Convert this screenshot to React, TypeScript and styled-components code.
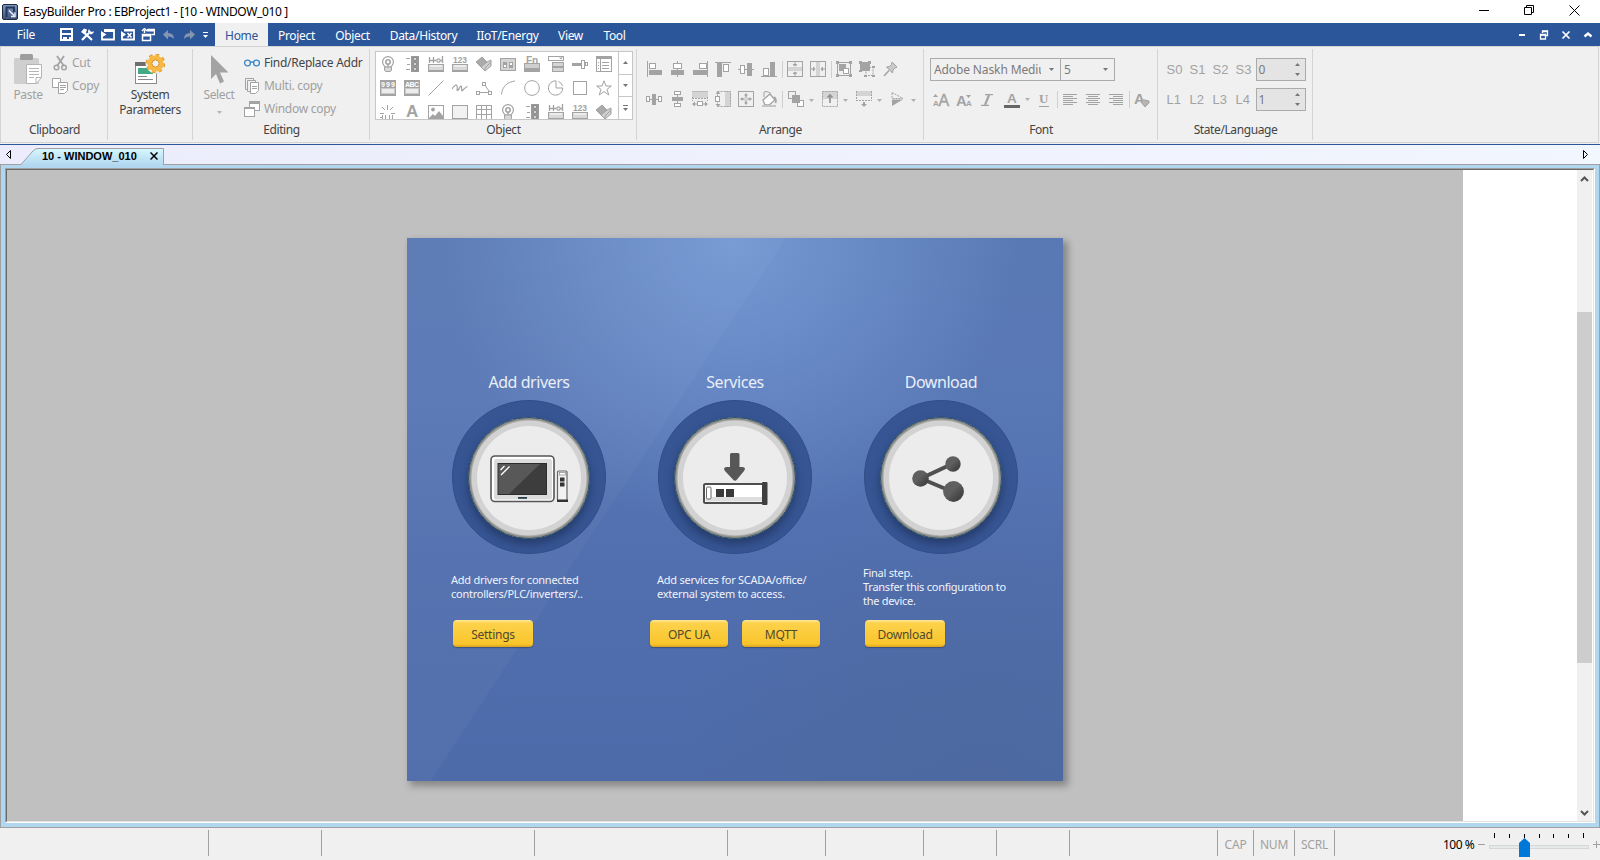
import React from "react";
import styled, { createGlobalStyle } from "styled-components";

const GlobalStyle = createGlobalStyle`
  * { box-sizing: border-box; }
  body { margin: 0; background: #f0f0f0; overflow: hidden; }
  svg { display: block; flex: none; }
`;

const UI = `"Noto Sans", "Open Sans", sans-serif`;
const G = "#a3a3a3";
const L = "#d4d4d4";
const W = "#fff";

const Window = styled.div`
  width: 1600px;
  height: 860px;
  display: flex;
  flex-direction: column;
  font-family: ${UI};
  font-size: 12px;
  color: #444;
  background: #f0f0f0;
  white-space: nowrap;
  cursor: default;
`;

const TitleBar = styled.header`
  height: 23px;
  background: #fff;
  display: flex;
  align-items: center;
  padding-left: 2px;
  color: #000;
`;
const TitleText = styled.div`
  margin-left: 5px;
  line-height: 20px;
  letter-spacing: -0.36px;
  flex: 1;
`;
const WindowButtons = styled.div`
  display: flex;
  gap: 34px;
  padding-right: 20px;
  margin-top: -3px;
`;

const MenuBar = styled.nav`
  height: 23px;
  background: #2b579a;
  display: flex;
  align-items: center;
  color: #fff;
`;
const FileButton = styled.div`
  width: 52px;
  text-align: center;
  letter-spacing: -0.2px;
  line-height: 22px;
`;
const QuickAccess = styled.div`
  width: 163px;
  height: 23px;
  display: flex;
  align-items: center;
  padding-left: 7px;
`;
const MenuTab = styled.div<{ $w: number; $active?: boolean }>`
  width: ${(p) => p.$w}px;
  height: 23px;
  line-height: 25px;
  text-align: center;
  letter-spacing: -0.33px;
  background: ${(p) => (p.$active ? "#f0f0f0" : "transparent")};
  color: ${(p) => (p.$active ? "#2b579a" : "#fff")};
`;
const MdiButtons = styled.div`
  margin-left: auto;
  padding-right: 7px;
  display: flex;
  gap: 12px;
`;

const Ribbon = styled.section`
  height: 97px;
  margin: 0 1px 1px 0;
  border: 1px solid #d4d4d4;
  padding: 2px 0;
  display: flex;
`;
const Group = styled.div<{ $w: number }>`
  width: ${(p) => p.$w}px;
  height: 91px;
  border-right: 1px solid #d4d4d4;
  display: flex;
  flex-direction: column;
`;
const GroupBody = styled.div<{ $pl?: number; $pt?: number }>`
  height: 72px;
  display: flex;
  padding-left: ${(p) => p.$pl ?? 0}px;
  padding-top: ${(p) => p.$pt ?? 0}px;
`;
const Caption = styled.div`
  padding-left: 1px;
  text-align: center;
  line-height: 18px;
  letter-spacing: -0.4px;
`;
const BigButton = styled.div<{ $w: number; $off?: boolean }>`
  width: ${(p) => p.$w}px;
  display: flex;
  flex-direction: column;
  align-items: center;
  text-align: center;
  line-height: 15px;
  letter-spacing: -0.35px;
  color: ${(p) => (p.$off ? "#a0a0a0" : "#444")};
`;
const BigIcon = styled.div`
  height: 33px;
`;
const Commands = styled.div<{ $ml: number }>`
  display: flex;
  flex-direction: column;
  margin: -3px 0 0 ${(p) => p.$ml}px;
`;
const Command = styled.div<{ $off?: boolean }>`
  height: 23px;
  flex: none;
  display: flex;
  align-items: center;
  gap: 4px;
  letter-spacing: -0.27px;
  color: ${(p) => (p.$off ? "#a0a0a0" : "#444")};
`;

const Gallery = styled.div`
  width: 258px;
  height: 69px;
  margin: 1px 0 0 5px;
  border: 1px solid #c6c6c6;
  background: #fff;
  display: flex;
`;
const GalleryGrid = styled.div`
  width: 242px;
  height: 67px;
  overflow: hidden;
  padding: 4px 0 0 4px;
  display: grid;
  grid-template-columns: repeat(10, 24px);
  grid-auto-rows: 24px;
`;
const GalleryScroll = styled.div`
  width: 14px;
  border-left: 1px solid #c6c6c6;
  display: flex;
  flex-direction: column;
`;
const ScrollCell = styled.div`
  flex: 1;
  display: flex;
  align-items: center;
  justify-content: center;
  & + & { border-top: 1px solid #c6c6c6; }
`;

const ToolRow = styled.div<{ $gap?: number; $h?: number }>`
  display: flex;
  align-items: center;
  gap: ${(p) => p.$gap ?? 7}px;
  height: ${(p) => p.$h ?? 16}px;
`;
const ToolRows = styled.div<{ $gap: number }>`
  display: flex;
  flex-direction: column;
  gap: ${(p) => p.$gap}px;
`;
const Divider = styled.i<{ $l: number; $r: number }>`
  width: 1px;
  height: 17px;
  background: #cfcfcf;
  margin-left: ${(p) => p.$l}px;
  margin-right: ${(p) => p.$r}px;
`;
const Slot = styled.span<{ $w: number }>`
  flex: none;
  width: ${(p) => p.$w}px;
  display: flex;
  justify-content: center;
`;
const MenuArrow = styled.span`
  width: 5px;
  margin: 2px 1px 0 -2px;
`;
const Combo = styled.div<{ $w: number }>`
  width: ${(p) => p.$w}px;
  height: 23px;
  border: 1px solid #ababab;
  display: flex;
  align-items: center;
  padding: 0 6px 0 3px;
  color: #7b7b7b;
  letter-spacing: -0.12px;
  & + & { margin-left: -1px; }
`;
const ComboText = styled.span`
  flex: 1;
  overflow: hidden;
  margin-right: 8px;
`;
const StateRow = styled.div`
  height: 23px;
  display: flex;
  align-items: center;
`;
const StateLabel = styled.span`
  width: 23px;
  font: 13px "Liberation Sans", sans-serif;
  color: #a3a3a3;
  &:nth-child(4) { width: 20px; }
`;
const Spinner = styled.div`
  width: 50px;
  height: 23px;
  border: 1px solid #ababab;
  background: #e4e4e4;
  display: flex;
  align-items: center;
  justify-content: space-between;
  padding: 0 5px 0 2px;
  color: #7b7b7b;
`;

const TabStrip = styled.div`
  height: 20px;
  border-top: 1px solid #2b579a;
  background: linear-gradient(90deg, #ececfc, #f2f6fe);
  display: flex;
  justify-content: space-between;
  align-items: flex-start;
`;
const TabScroll = styled.div<{ $w: number }>`
  width: ${(p) => p.$w}px;
  padding-top: 4px;
`;
const TabGroup = styled.div`
  display: flex;
`;
const DocTab = styled.div`
  position: relative;
  z-index: 1;
  margin: 3px 0 -1px;
  width: 144px;
  height: 18px;
  display: grid;
  & > * { grid-area: 1 / 1; }
`;
const DocTabLabel = styled.div`
  z-index: 1;
  display: flex;
  align-items: center;
  padding: 0 7px 2px 21px;
  justify-content: space-between;
  font: bold 11px "Liberation Sans", sans-serif;
  color: #000;
`;

const Frame = styled.main`
  height: 664px;
  border: 1px solid #a0a0a0;
  background: #b1d6f0;
  padding: 3px 4px 4px;
`;
const Sunken = styled.div`
  height: 655px;
  border: 1px solid;
  border-color: #a0a0a0 #fff #fff #a0a0a0;
`;
const Workspace = styled.div`
  height: 653px;
  border: 1px solid;
  border-color: #696969 #e3e3e3 #e3e3e3 #696969;
  background: #fff;
  display: flex;
`;
const Canvas = styled.div`
  width: 1456px;
  background: #c0c0c0;
  padding: 68px 0 0 400px;
`;
const ScrollBar = styled.div`
  margin: 0 1px 0 auto;
  width: 15px;
  background: #f0f0f0;
  display: flex;
  flex-direction: column;
  align-items: center;
  padding: 6px 0 5px;
`;
const ScrollThumb = styled.div`
  width: 15px;
  height: 351px;
  margin: 130px 0 auto;
  background: #cdcdcd;
`;

const Panel = styled.div`
  width: 656px;
  height: 543px;
  background:
    linear-gradient(to bottom right, rgba(255,255,255,.03) 50%, transparent 50.2%) 23px 0 / 355px 543px no-repeat,
    linear-gradient(rgba(255,255,255,.03), rgba(255,255,255,.03)) 0 0 / 23px 543px no-repeat,
    radial-gradient(circle 290px at 325px 0, rgba(135,173,232,.62), rgba(130,168,226,.37) 45%, transparent),
    radial-gradient(circle 320px at 580px 560px, rgba(76,100,145,.4), transparent),
    linear-gradient(#5979b4, #5877b5 30%, #516fae 60%, #4d6ba9);
  box-shadow: 4px 4px 7px 1px rgba(0, 0, 0, .3);
  padding: 133px 0 0 19px;
  display: flex;
  color: #e9eef8;
`;
const Step = styled.section`
  width: 206px;
  display: flex;
  flex-direction: column;
`;
const StepTitle = styled.h2`
  margin: 0 0 7px;
  font-size: 16px;
  font-weight: 400;
  line-height: 22px;
  letter-spacing: -0.45px;
  text-align: center;
`;
const Ring = styled.div`
  width: 154px;
  height: 154px;
  margin: 0 auto;
  border-radius: 50%;
  background: #375593;
  border: 1px solid #314e89;
  display: flex;
  align-items: center;
  justify-content: center;
  padding-top: 1px;
`;
const Disc = styled.div<{ $pt: number; $pr: number }>`
  width: 122px;
  height: 122px;
  border-radius: 50%;
  background: #ececec;
  border: 1px solid #2f5162;
  box-shadow: inset 0 0 0 1.5px #8e8e88, inset 0 0 0 2.5px #aaa, inset 0 0 0 8px #d2d2d2, 0 5px 8px rgba(20, 35, 70, .5);
  padding: ${(p) => p.$pt}px ${(p) => p.$pr}px 0 0;
  display: flex;
  align-items: center;
  justify-content: center;
`;
const Description = styled.p`
  margin: 0;
  height: 66px;
  padding: 0 0 1px 25px;
  display: flex;
  flex-direction: column;
  justify-content: center;
  font-size: 11px;
  line-height: 14px;
  letter-spacing: -0.25px;
  color: #f0f3fa;
`;
const Actions = styled.div<{ $pl: number }>`
  display: flex;
  gap: 14px;
  padding-left: ${(p) => p.$pl}px;
`;
const ActionButton = styled.div<{ $w: number }>`
  width: ${(p) => p.$w}px;
  height: 27px;
  border-radius: 4px;
  background: linear-gradient(#ffe9a0, #fcd24c 3px, #fac52c 24px, #d9a41c);
  box-shadow: 0 1px 1px rgba(40, 50, 80, .5);
  color: #50492e;
  font-size: 12px;
  line-height: 29px;
  text-align: center;
  letter-spacing: -0.25px;
`;

const StatusBar = styled.footer`
  height: 32px;
  display: flex;
  padding-top: 2px;
`;
const StatusCell = styled.div<{ $w: number }>`
  width: ${(p) => p.$w}px;
  height: 26px;
  border-right: 1px solid #a0a0a0;
  line-height: 29px;
  text-align: center;
  color: #a0a0a0;
  letter-spacing: -0.2px;
`;
const Zoom = styled.div`
  margin-left: auto;
  display: flex;
  color: #000;
  line-height: 29px;
  letter-spacing: -0.5px;
`;
const ZoomText = styled.span`
  width: 35px;
`;

type IconProps = { w?: number; h?: number; c?: string; children: React.ReactNode };
const Icon = ({ w = 16, h = 16, c = G, children }: IconProps) => (
  <svg width={w} height={h} viewBox={`0 0 ${w} ${h}`} fill="none" stroke={c} strokeWidth="1">
    {children}
  </svg>
);
type BoxProps = { x: number; y: number; w: number; h: number; f?: string; s?: string };
const B = ({ x, y, w, h, f = G }: BoxProps) => (
  <rect x={x} y={y} width={w} height={h} fill={f} stroke="none" />
);
const O = ({ x, y, w, h, f = "none", s = G }: BoxProps) => (
  <rect x={x + 0.5} y={y + 0.5} width={w - 1} height={h - 1} fill={f} stroke={s} />
);
const DashBox = ({ x, y, w, h }: BoxProps) => (
  <rect x={x + 0.5} y={y + 0.5} width={w - 1} height={h - 1} strokeDasharray="2 1" />
);
type GlyphProps = { x: number; y: number; s: number; c?: string; children: string; w?: number; f?: string };
const T = ({ x, y, s, c = G, children, w, f = "Liberation Sans" }: GlyphProps) => (
  <text x={x} y={y} fontSize={s} fontWeight="bold" fontFamily={`${f}, sans-serif`} fill={c} stroke="none" textLength={w}>{children}</text>
);
const Caret = ({ up, c = "#777" }: { up?: boolean; c?: string }) => (
  <svg width="5" height="3" viewBox="0 0 5 3">
    <path d={up ? "M0 3L2.500 0L5 3Z" : "M0 0H5L2.500 3Z"} fill={c} />
  </svg>
);

/* Object gallery */
const Bulb = () => (
  <Icon>
    <circle cx="8" cy="6" r="5.400" strokeWidth="1.200" />
    <circle cx="8" cy="6" r="2.200" strokeWidth="1.600" />
    <path d="M8 8v3" strokeWidth="1.400" />
    <path d="M4.500 11h7v3.500l-1.500 1h-4L4.500 14.500z" fill="#d9d9d9" />
  </Icon>
);
const Traffic = () => (
  <Icon>
    <path d="M2 2.500h4M3 8.500h3M2 13.500h4" />
    <B x={7} y={0} w={8} h={16} f="#999" />
    <g fill={L} stroke="#888"><circle cx="11" cy="3" r="1.800" /><circle cx="11" cy="8" r="1.800" /><circle cx="11" cy="13" r="1.800" /></g>
  </Icon>
);
const Key = () => (
  <>
    <O x={0} y={8} w={16} h={8} f="#d9d9d9" />
    <B x={0} y={14} w={16} h={2} />
    <B x={2} y={9} w={12} h={2} f="#ededed" />
  </>
);
const MultiState = () => (
  <Icon>
    <path d="M1.500 1v6M1.500 4.500h4M5.500 1v6M6 4.500h2M14.500 0v7M12.500 4.500h2" strokeWidth="1.300" />
    <circle cx="10.500" cy="4.500" r="1.700" strokeWidth="1.300" />
    <Key />
  </Icon>
);
const Digits = () => <Icon><T x={1} y={7} s={8.5} w={14}>123</T><Key /></Icon>;
const Cubes = () => (
  <Icon>
    <path d="M0 6L6 1L11 6L5 11Z" fill="#aaa" />
    <path d="M5 11L11 6L15 4V10L9 15Z" fill="#cfcfcf" />
    <path d="M5 11L9 15V12L15 6" />
  </Icon>
);
const Toggle = () => (
  <Icon>
    <O x={0} y={2} w={16} h={13} f={L} />
    <O x={3} y={6} w={4} h={6} f="#fff" /><O x={9} y={6} w={4} h={6} f="#fff" />
    <B x={4} y={6} w={2} h={3} /><B x={10} y={9} w={2} h={3} />
  </Icon>
);
const FnKey = () => (
  <Icon>
    <O x={0} y={7} w={16} h={9} f="#cfcfcf" /><B x={0} y={12} w={16} h={4} />
    <T x={2} y={8} s={10}>Fn</T>
  </Icon>
);
const ComboObj = () => (
  <Icon>
    <O x={0} y={0} w={16} h={5} f="#fff" /><path d="M11 1.500h4l-2 2z" fill={G} stroke="none" />
    <O x={4} y={6} w={12} h={5} f={L} /><O x={4} y={11} w={12} h={5} f={L} />
  </Icon>
);
const Slider = () => (
  <Icon><B x={0} y={7} w={9} h={3} /><O x={9} y={4} w={4} h={9} f="#fff" /><O x={13} y={6} w={3} h={4} f="#fff" /></Icon>
);
const ListObj = () => (
  <Icon><O x={0} y={0} w={16} h={16} f="#fff" /><B x={0} y={0} w={16} h={3} /><path d="M4.500 3v12M6 6.500h7M6 9.500h7M6 12.500h7M2 6.500h1M2 9.500h1M2 12.500h1" /></Icon>
);
const Numeric = ({ t }: { t: string }) => (
  <Icon><B x={0} y={0} w={16} h={16} /><T x={1} y={6.5} s={7} w={14} c="#fff">{t}</T><O x={1} y={8} w={14} h={6} f="#ececec" s="#c9c9c9" /></Icon>
);
const LineObj = () => <Icon><path d="M.5 15.500L15.500.5" /></Icon>;
const Scribble = () => <Icon><path d="M0 9C2 6 4 4 5 6S4 12 6 10S9 4 9.500 7S9 12 11 10S15 6 15.500 7" strokeWidth="1.200" /></Icon>;
const PolyObj = () => (
  <Icon><O x={6} y={2} w={4} h={4} f="#fff" /><O x={0} y={11} w={4} h={4} f="#fff" /><O x={12} y={11} w={4} h={4} f="#fff" /><path d="M4 12.500h8M9.500 6L13 11" /></Icon>
);
const ArcObj = () => <Icon><path d="M1.500 14.500C2 7 7 2 15 1" /></Icon>;
const CircleObj = () => <Icon><circle cx="8" cy="8" r="7.400" /></Icon>;
const PieObj = () => <Icon><path d="M8 8V.8A7.200 7.200 0 1 0 14.800 8ZM10.500 1.500A6.500 6.500 0 0 1 14.500 6" /></Icon>;
const RectObj = () => <Icon><O x={1} y={1} w={14} h={14} /></Icon>;
const StarObj = () => <Icon><path d="M8 .8L10 6H15.300L11 9.400L12.800 15L8 11.600L3.200 15L5 9.400L.7 6H6Z" /></Icon>;
const Burst = () => <Icon><path d="M7.500 1v5M2 3l3 3M13 3l-3 3M0 9.500h4M11 9.500h4M2.500 11v5M5.500 11v5M9.500 11v5M12.500 11v5M0 13.500h2" /></Icon>;
const LetterA = () => <Icon><T x={2} y={13} s={17}>A</T></Icon>;
const Picture = () => (
  <Icon><O x={0} y={1} w={16} h={14} f="#fff" /><circle cx="5" cy="5.500" r="1.500" fill={G} /><path d="M1 14L5 10L7 12L11 7L15 12V15H1Z" fill={G} stroke="none" /></Icon>
);
const Pane = () => <Icon><O x={0} y={1} w={16} h={14} f="#f2f2f2" /></Icon>;
const TableObj = () => <Icon><O x={0} y={1} w={16} h={16} /><path d="M5.500 1v15M10.500 1v15M0 5.500h16M0 10.500h16" /></Icon>;
const Nines = () => <Numeric t="999" />;
const Ascii = () => <Numeric t="ABC" />;

const GALLERY = [
  Bulb, Traffic, MultiState, Digits, Cubes, Toggle, FnKey, ComboObj, Slider, ListObj,
  Nines, Ascii, LineObj, Scribble, PolyObj, ArcObj, CircleObj, PieObj, RectObj, StarObj,
  Burst, LetterA, Picture, Pane, TableObj, Bulb, Traffic, MultiState, Digits, Cubes,
];

const Arrow = () => <MenuArrow><Caret c="#b0b0b0" /></MenuArrow>;

const AlignTop = () => (
  <ToolRow>
    <Icon><path d="M1.500 0v16" /><O x={3} y={2} w={7} h={6} f="#fff" /><B x={3} y={9} w={13} h={5} /></Icon>
    <Icon><path d="M8.500 0v16" /><O x={4} y={2} w={9} h={6} f="#fff" /><B x={2} y={9} w={13} h={5} /></Icon>
    <Icon><path d="M15.500 0v16" /><O x={7} y={2} w={8} h={6} f="#fff" /><B x={1} y={9} w={14} h={5} /></Icon>
    <Icon><path d="M0 1.500h16" /><B x={2} y={2} w={5} h={14} /><O x={8} y={3} w={6} h={8} f="#fff" /></Icon>
    <Icon><path d="M0 8.500h16" /><O x={2} y={4} w={5} h={9} f="#fff" /><B x={9} y={2} w={5} h={13} /></Icon>
    <Icon><path d="M0 15.500h16" /><O x={2} y={7} w={6} h={8} f="#fff" /><B x={9} y={1} w={5} h={14} /></Icon>
    <Divider $l={-2} $r={-3} />
    <Icon><O x={0} y={0} w={16} h={16} /><B x={1} y={6} w={14} h={4} f={L} /><path d="M8 1v3M8 12v3M6 3.500h4L8 5zM6 12.500h4L8 11z" /></Icon>
    <Icon><O x={0} y={0} w={16} h={16} /><B x={6} y={1} w={4} h={14} f={L} /><path d="M1 8h3M12 8h3M3.500 6v4L5 8zM12.500 6v4L11 8z" /></Icon>
    <Divider $l={-2} $r={-3} />
    <Icon><O x={1} y={1} w={14} h={14} /><B x={3} y={3} w={7} h={7} /><O x={7} y={7} w={6} h={6} f="#fff" /><B x={0} y={0} w={3} h={3} /><B x={13} y={0} w={3} h={3} /><B x={0} y={13} w={3} h={3} /><B x={13} y={13} w={3} h={3} /></Icon>
    <Icon><B x={1} y={1} w={10} h={9} /><path d="M7 10.500v4h7v-8h-4" strokeDasharray="2 1" /><B x={0} y={0} w={3} h={3} /><B x={9} y={0} w={3} h={3} /><B x={0} y={9} w={3} h={2} /><B x={13} y={5} w={3} h={2} /><B x={5} y={14} w={3} h={2} /><B x={13} y={14} w={3} h={2} /></Icon>
    <Icon><path d="M2 15L7 9.500" strokeWidth="1.500" /><path d="M10 1l5 5-2 1-2 2-.5 3L4.500 6l3-.5 2-2z" fill="#c9c9c9" /></Icon>
  </ToolRow>
);
const AlignBottom = () => (
  <ToolRow>
    <Icon><O x={0} y={5} w={4} h={6} f="#fff" /><B x={6} y={3} w={4} h={11} /><O x={12} y={5} w={4} h={6} f="#fff" /><path d="M4 8.500h8" /></Icon>
    <Icon><O x={5} y={0} w={7} h={4} f="#fff" /><B x={3} y={6} w={11} h={4} /><O x={5} y={12} w={7} h={4} f="#fff" /><path d="M8.500 4v8" /></Icon>
    <Icon><B x={0} y={0} w={16} h={7} f={L} /><path d="M0 .5h16" stroke="#bbb" /><path d="M.5 6v4M15.500 6v4M0 7.500h16" strokeDasharray="2 1" /><O x={5} y={10} w={6} h={5} f="#fff" /><path d="M0 13l3-2.500v5zM16 13l-3-2.500v5z" fill={G} stroke="none" /><path d="M2 13h3M11 13h3" /></Icon>
    <Icon><B x={10} y={0} w={6} h={16} f={L} /><DashBox x={2} y={0} w={14} h={16} /><O x={0} y={5} w={5} h={6} f="#fff" /><path d="M3 0l2.500 3h-5zM3 16l2.500-3h-5z" fill={G} stroke="none" /></Icon>
    <Icon><O x={0} y={0} w={16} h={16} /><B x={6} y={6} w={4} h={4} f={L} /><path d="M8 2l2 2.500h-4zM8 14l2-2.500h-4zM2 8l2.500-2v4zM14 8l-2.500-2v4z" fill={G} stroke="none" /><path d="M8 4v2M8 10v2M4 8h2M10 8h2" strokeWidth="1.500" /></Icon>
    <Icon><path d="M3 1v5M3 1l3-.5 4 2" /><path d="M2 9l7-6 5 6-6 5H4z" fill="#fff" strokeWidth="1.300" /><path d="M13 6q3 2 1.500 6" strokeWidth="1.600" /><B x={1} y={14} w={14} h={2} f="#c5c5c5" /></Icon>
    <Divider $l={-2} $r={-2} />
    <Icon><O x={0} y={0} w={8} h={8} /><O x={9} y={9} w={7} h={7} f="#fff" /><B x={4} y={4} w={8} h={8} /></Icon>
    <Arrow />
    <Icon><B x={0} y={0} w={16} h={8} f={L} /><DashBox x={0} y={0} w={16} h={16} /><path d="M8 12V4M5.500 6.500L8 4l2.500 2.500" strokeWidth="1.600" stroke="#909090" /></Icon>
    <Arrow />
    <Icon><B x={0} y={0} w={16} h={5} f={L} /><path d="M.5 0v9M15.500 0v9M0 9.500h16" strokeDasharray="2 1" /><path d="M8 11v2" strokeWidth="2" /><path d="M5 13h6l-3 3z" fill={G} stroke="none" /></Icon>
    <Arrow />
    <Icon><path d="M2 1.500L13 7.500H2z" strokeDasharray="2 1" /><path d="M2 15L13 8.500H2z" fill={G} stroke="none" /></Icon>
    <Arrow />
  </ToolRow>
);

const Lines = ({ k }: { k: "l" | "c" | "r" }) => (
  <Icon w={14} h={12}>
    {[14, 10, 14, 10, 14, 10].map((w, i) => (
      <B key={i} x={k === "l" ? 0 : k === "r" ? 14 - w : (14 - w) / 2} y={i * 2} w={w} h={1} />
    ))}
  </Icon>
);

const SysIcon = () => (
  <svg width="30" height="30" viewBox="0 0 30 30">
    <rect x=".5" y="8.500" width="21" height="21" fill="#fff" stroke="#8a8a8a" />
    <rect width="22" height="4" y="8" fill="#6d6d6d" />
    <rect x="3" y="14" width="15" height="6" fill="#43a886" />
    <path d="M3 22.500h9M3 25.500h15" stroke="#8a8a8a" />
    <circle cx="20.500" cy="9.500" r="8" fill="none" stroke="#f0f0f0" strokeWidth="4" />
    <circle cx="20.500" cy="9.500" r="8.300" fill="none" stroke="#d9912b" strokeWidth="3" strokeDasharray="3.260 3.260" />
    <circle cx="20.500" cy="9.500" r="5.800" fill="none" stroke="#f7b944" strokeWidth="4.600" />
    <circle cx="20.500" cy="9.500" r="8.300" fill="none" stroke="#f7b944" strokeWidth="1.500" strokeDasharray="3.260 3.260" />
    <circle cx="20.500" cy="9.500" r="3.600" fill="#f0f0f0" stroke="#d9912b" />
  </svg>
);

const DriversIcon = () => (
  <svg width="78" height="48" viewBox="0 0 78 48">
    <rect x="1" y="1" width="63" height="45.500" rx="4" fill="#fff" stroke="#555" strokeWidth="1.600" />
    <rect x="4" y="4" width="58" height="40.500" rx="2" fill="#dcdcdc" />
    <rect x="8" y="8.500" width="48.500" height="31" fill="#3d3d3d" stroke="#2c2c2c" />
    <path d="M8.500 9H50L19 39H8.500Z" fill="#585858" />
    <path d="M10.500 15l4-4M11 20l8.500-8.500" stroke="#fff" strokeWidth="1.400" />
    <rect x="28" y="42" width="9" height="1.800" fill="#23404a" />
    <rect x="67.500" y="16" width="9.500" height="30" rx="1" fill="#f2f2f2" stroke="#666" strokeWidth="1.200" />
    <rect x="69.500" y="17.500" width="6" height="2.500" fill="#fff" stroke="#888" strokeWidth=".7" />
    <rect x="70" y="22.500" width="4.500" height="4" fill="#333" /><rect x="70" y="27.500" width="4.500" height="4" fill="#333" />
    <rect x="67" y="44.500" width="11" height="2.500" fill="#333" />
  </svg>
);
const ServicesIcon = () => (
  <svg width="66" height="54" viewBox="0 0 66 54">
    <path d="M28 2.500q0-1.500 1.500-1.500h6.500q1.500 0 1.500 1.500V15h3q4 .5 1.500 4L35 27.500q-2 2.500-4 0L23 19q-2.500-3.500 1.500-4H28Z" fill="#575757" />
    <rect x="2" y="32" width="60" height="19" rx="1.500" fill="#fff" stroke="#4e4e4e" strokeWidth="2" />
    <rect x="3.500" y="45" width="57" height="4.500" fill="#ddd" />
    <rect x="4.500" y="35" width="4.500" height="12" rx="1.200" fill="#fff" stroke="#666" />
    <rect x="14" y="37" width="8" height="8" fill="#3a3a3a" /><rect x="24" y="37" width="8" height="8" fill="#3a3a3a" />
    <rect x="60" y="30" width="5.500" height="23" rx="1" fill="#3f3f3f" />
  </svg>
);
const ShareIcon = () => (
  <svg width="52" height="46" viewBox="0 0 52 46">
    <defs>
      <linearGradient id="ball" x1="0" y1="0" x2="1" y2="1"><stop offset=".45" stopColor="#5f5f5f" /><stop offset=".75" stopColor="#454545" /></linearGradient>
    </defs>
    <path d="M41 7.500L9 22.500L41 36" fill="none" stroke="#4f4f4f" strokeWidth="4" />
    <circle cx="8.500" cy="22.500" r="8.300" fill="url(#ball)" /><circle cx="41" cy="8" r="7.700" fill="url(#ball)" /><circle cx="41.500" cy="35.500" r="10.400" fill="url(#ball)" />
  </svg>
);

const STEPS = [
  { title: "Add drivers", icon: <DriversIcon />, pt: 3, pr: 0, lines: ["Add drivers for connected", "controllers/PLC/inverters/.."], buttons: ["Settings"], w: 80, pl: 27 },
  { title: "Services", icon: <ServicesIcon />, pt: 2, pr: 0, lines: ["Add services for SCADA/office/", "external system to access."], buttons: ["OPC UA", "MQTT"], w: 78, pl: 18 },
  { title: "Download", icon: <ShareIcon />, pt: 3, pr: 6, lines: ["Final step.", "Transfer this configuration to", "the device."], buttons: ["Download"], w: 80, pl: 27 },
];

const STATUS: [number, string][] = [
  [209, ""], [113, ""], [213, ""], [193, ""], [98, ""], [98, ""], [73, ""], [73, ""], [148, ""], [36, "CAP"], [41, "NUM"], [40, "SCRL"],
];

const StateLine = ({ labels, value }: { labels: string[]; value: string }) => (
  <StateRow>
    {labels.map((l) => <StateLabel key={l}>{l}</StateLabel>)}
    <Spinner>
      <span>{value}</span>
      <svg width="5" height="13" viewBox="0 0 5 13"><path d="M0 3L2.500 0L5 3ZM0 10H5L2.500 13Z" fill="#777" /></svg>
    </Spinner>
  </StateRow>
);

export default function App() {
  return (
    <Window>
      <GlobalStyle />
      <TitleBar>
        <svg width="16" height="16" viewBox="0 0 16 16">
          <defs><linearGradient id="app" x1="0" y1="0" x2="0" y2="1"><stop offset="0" stopColor="#8298bd" /><stop offset="1" stopColor="#3c5078" /></linearGradient></defs>
          <rect x=".5" y=".5" width="15" height="15" rx="1.500" fill="url(#app)" stroke="#1e2b47" />
          <path d="M4.500 13V3.500H12V8" fill="none" stroke="#24375c" strokeWidth="2" />
          <path d="M7 6.500l5 5M13 8.500V12.500H9" fill="none" stroke="#e8eef8" strokeWidth="1.400" />
        </svg>
        <TitleText>EasyBuilder Pro : EBProject1 - [10 - WINDOW_010 ]</TitleText>
        <WindowButtons>
          <Icon w={11} h={11} c="#000"><path d="M0 5.500h10" /></Icon>
          <Icon w={11} h={11} c="#000"><path d="M.5 2.500h7v7h-7zM2.500 2V.5h7v7H8" /></Icon>
          <Icon w={11} h={11} c="#000"><path d="M.5.5l10 10M10.500.5l-10 10" /></Icon>
        </WindowButtons>
      </TitleBar>

      <MenuBar>
        <FileButton>File</FileButton>
        <QuickAccess>
          <Slot $w={14}><Icon w={13} h={13} c={W}><path d="M1 1h11v11H1z" strokeWidth="2" /><B x={2} y={5} w={9} h={2} f={W} /><B x={3} y={9} w={4} h={3} f={W} /><B x={9} y={9} w={2} h={3} f={W} /></Icon></Slot>
          <Slot $w={28}><Icon w={14} h={13} c={W}><path d="M4 4.500L12 12M2 12l7-7" strokeWidth="2.200" /><path d="M1 4l3-3.500 3 1-1 3-2 1.500zM9 1l1 2 2 1 1.500-1v2L11 6.500 8.500 5 8 3z" fill={W} stroke="none" /></Icon></Slot>
          <Slot $w={14}><Icon w={14} h={13} c={W}><path d="M3 2h10v9.500H1V9" strokeWidth="1.800" /><B x={3} y={1} w={10} h={3} f={W} /><path d="M0 3l5.500 3.500L0 10z" fill={W} stroke="none" /></Icon></Slot>
          <Slot $w={26}><Icon w={14} h={13} c={W}><path d="M3 2h10v9.500H1V9" strokeWidth="1.800" /><B x={3} y={1} w={10} h={2.5} f={W} /><path d="M0 3l5 3.500L0 10z" fill={W} stroke="none" /><path d="M6.500 5l4 4.500M10.500 5l-4 4.500" strokeWidth="1.500" /></Icon></Slot>
          <Slot $w={14}><Icon w={14} h={14} c={W}><path d="M6.500 1.500h7v5h-3M1.500 6.500h8v6h-8z" strokeWidth="1.500" /><B x={6} y={1} w={8} h={2.5} f={W} /><B x={1} y={6} w={9} h={2.5} f={W} /><path d="M3.500 5V2M1 3l2.500-2.500L6 3" strokeWidth="1.400" /></Icon></Slot>
          <Slot $w={28}><Icon w={12} h={10}><path d="M0 4.500L5 0v3q6 0 6 6q-2-3-6-2.500v3z" fill="#8595b0" stroke="none" /></Icon></Slot>
          <Slot $w={12}><Icon w={12} h={10}><path d="M12 4.500L7 0v3q-6 0-6 6q2-3 6-2.500v3z" fill="#8595b0" stroke="none" /></Icon></Slot>
          <Slot $w={21}><Icon w={5} h={6} c={W}><path d="M0 .5h5" /><path d="M0 3h5L2.500 6z" fill={W} stroke="none" /></Icon></Slot>
        </QuickAccess>
        <MenuTab $w={53} $active>Home</MenuTab>
        <MenuTab $w={57}>Project</MenuTab>
        <MenuTab $w={55}>Object</MenuTab>
        <MenuTab $w={87}>Data/History</MenuTab>
        <MenuTab $w={81}>IIoT/Energy</MenuTab>
        <MenuTab $w={45}>View</MenuTab>
        <MenuTab $w={43}>Tool</MenuTab>
        <MdiButtons>
          <Icon w={10} h={10} c={W}><path d="M2 5h6" strokeWidth="2" /></Icon>
          <Icon w={10} h={10} c={W}><path d="M3.500 3V1h5v4.500H7" strokeWidth="1.300" /><path d="M1.500 4.500h5V9h-5z" strokeWidth="1.300" /><path d="M3 1.500h6M1 5h6" strokeWidth="1.500" /></Icon>
          <Icon w={10} h={10} c={W}><path d="M1.500 1.500l7 7M8.500 1.500l-7 7" strokeWidth="1.700" /></Icon>
          <Icon w={10} h={10} c={W}><path d="M1.500 6.500L5 3.500l3.500 3" strokeWidth="2.400" /></Icon>
        </MdiButtons>
      </MenuBar>

      <Ribbon>
        <Group $w={107}>
          <GroupBody $pl={5} $pt={5}>
            <BigButton $w={44} $off>
              <BigIcon>
                <svg width="28" height="30" viewBox="0 0 28 30">
                  <rect y="4" width="25" height="26" rx="1.500" fill="#cfcfcf" /><rect x="6" width="13" height="6" rx="1.500" fill="#9d9d9d" />
                  <path d="M12.500 10.500h15v13l-5 6h-10z" fill="#fff" stroke="#b5b5b5" /><path d="M27 23.500h-5v5.500" fill="none" stroke="#b5b5b5" />
                  <path d="M15 14.500h10M15 17.500h10M15 20.500h10M15 23.500h5" stroke="#b5b5b5" />
                </svg>
              </BigIcon>
              Paste
            </BigButton>
            <Commands $ml={2}>
              <Command $off><Icon><path d="M5 1L12 11M12 1L5 11" strokeWidth="1.800" /><circle cx="4.500" cy="12.500" r="2.300" strokeWidth="1.500" /><circle cx="12" cy="12.500" r="2.300" strokeWidth="1.500" /></Icon>Cut</Command>
              <Command $off><Icon><path d="M.5.5h8v9h-8z" fill="#fff" /><path d="M6.500 4.500h9v8l-3 3h-6z" fill="#fff" /><path d="M8 7.500h6M8 9.500h6M8 11.500h4" /></Icon>Copy</Command>
            </Commands>
          </GroupBody>
          <Caption>Clipboard</Caption>
        </Group>

        <Group $w={85}>
          <GroupBody $pt={5}>
            <BigButton $w={86}>
              <BigIcon><SysIcon /></BigIcon>
              <span>System<br />Parameters</span>
            </BigButton>
          </GroupBody>
        </Group>

        <Group $w={177}>
          <GroupBody $pl={4} $pt={5}>
            <BigButton $w={44} $off>
              <BigIcon><svg width="20" height="30" viewBox="0 0 20 30"><path d="M2 1V25L7 20L11 29.500L15 27.500L11 18.500H19.500Z" fill={G} /></svg></BigIcon>
              Select
              <Icon w={5} h={12}><path d="M0 9h5l-2.500 3z" fill="#b5b5b5" stroke="none" /></Icon>
            </BigButton>
            <Commands $ml={3}>
              <Command><Icon c="#3c87c7"><circle cx="3.500" cy="8" r="2.900" strokeWidth="1.300" /><circle cx="12.500" cy="8" r="2.900" strokeWidth="1.300" /><path d="M6 7.500q2-1 4 0" strokeWidth="1.300" /></Icon>Find/Replace Addr</Command>
              <Command $off><Icon><path d="M4 11.500H1.500V.5h8V3" /><path d="M6 13.500H3.500v-11h8V5" /><path d="M6.500 4.500h8v8l-3 3h-5z" fill="#fff" /><path d="M8 8.500h5M8 10.500h5" /></Icon>Multi. copy</Command>
              <Command $off><Icon><O x={5} y={0} w={11} h={10} f="#fff" /><B x={5} y={0} w={11} h={3} /><O x={0} y={6} w={11} h={10} f="#fff" /><B x={0} y={6} w={11} h={2} /></Icon>Window copy</Command>
            </Commands>
          </GroupBody>
          <Caption>Editing</Caption>
        </Group>

        <Group $w={267}>
          <GroupBody $pt={1}>
            <Gallery>
              <GalleryGrid>{GALLERY.map((Item, i) => <Item key={i} />)}</GalleryGrid>
              <GalleryScroll>
                <ScrollCell><Caret up /></ScrollCell>
                <ScrollCell><Caret /></ScrollCell>
                <ScrollCell><Icon w={5} h={6} c="#777"><path d="M0 .5h5" /><path d="M0 3h5L2.500 6z" fill="#777" stroke="none" /></Icon></ScrollCell>
              </GalleryScroll>
            </Gallery>
          </GroupBody>
          <Caption>Object</Caption>
        </Group>

        <Group $w={287}>
          <GroupBody $pl={9} $pt={12}>
            <ToolRows $gap={14}>
              <AlignTop />
              <AlignBottom />
            </ToolRows>
          </GroupBody>
          <Caption>Arrange</Caption>
        </Group>

        <Group $w={234}>
          <GroupBody $pl={6} $pt={9}>
            <ToolRows $gap={7}>
              <ToolRow $gap={0} $h={23}>
                <Combo $w={131}><ComboText>Adobe Naskh Medium</ComboText><Caret /></Combo>
                <Combo $w={55}><ComboText>5</ComboText><Caret /></Combo>
              </ToolRow>
              <ToolRow $gap={0} $h={23}>
                <Slot $w={22}><Icon w={17}><T x={0} y={14} s={8}>A</T><text x="5.500" y="14" fontSize="16" fontFamily="Liberation Sans" fill={G} stroke={G} strokeWidth=".4">A</text><path d="M0 5h5L2.500 2z" fill={G} stroke="none" /></Icon></Slot>
                <Slot $w={24}><Icon w={17}><T x={0} y={14} s={15}>A</T><T x={10} y={14} s={8}>A</T><path d="M10 3h5l-2.500 3z" fill={G} stroke="none" /></Icon></Slot>
                <Slot $w={22}><Icon w={12}><path d="M4 2.700h8M0 13.300h8" strokeWidth="1.300" /><path d="M8 3L4 13" strokeWidth="2.200" /></Icon></Slot>
                <Slot $w={27}><Icon><T x={3} y={11} s={13.5}>A</T><B x={0} y={13} w={16} h={3} f="#666" /></Icon></Slot>
                <Slot $w={4}><Caret c="#b0b0b0" /></Slot>
                <Slot $w={31}><Icon w={11}><T x={0} y={11} s={13} f="Liberation Serif">U</T><path d="M0 14.500h10" /></Icon></Slot>
                <Divider $l={-3} $r={5} />
                <Lines k="l" />
                <Slot $w={32}><Lines k="c" /></Slot>
                <Lines k="r" />
                <Divider $l={6} $r={4} />
                <Icon><T x={0} y={12} s={15}>A</T><path d="M8 8l3 0 4 1v2l-4 4-4-5z" fill="#b5b5b5" stroke={G} /></Icon>
              </ToolRow>
            </ToolRows>
          </GroupBody>
          <Caption>Font</Caption>
        </Group>

        <Group $w={155}>
          <GroupBody $pl={8.5} $pt={9}>
            <ToolRows $gap={7}>
              <StateLine labels={["S0", "S1", "S2", "S3"]} value="0" />
              <StateLine labels={["L1", "L2", "L3", "L4"]} value="1" />
            </ToolRows>
          </GroupBody>
          <Caption>State/Language</Caption>
        </Group>
      </Ribbon>

      <TabStrip>
        <TabGroup>
          <TabScroll $w={21}><svg width="16" height="11" viewBox="0 0 16 11"><path d="M10.500 1.500v8L6.500 5.500z" fill="none" stroke="#000" /></svg></TabScroll>
          <DocTab>
            <svg width="144" height="18" viewBox="0 0 144 18">
              <defs><linearGradient id="tab" x1="0" y1="0" x2="0" y2="1"><stop offset="0" stopColor="#d6f8fd" /><stop offset="1" stopColor="#b1d6f0" /></linearGradient></defs>
              <path d="M-1 17.500L14.500 .5H142.500V18H-1Z" fill="url(#tab)" /><path d="M-1 17.500L12 3Q14 .5 17 .5H142.500V17" fill="none" stroke="#a0a0a0" />
            </svg>
            <DocTabLabel>
              10 - WINDOW_010
              <svg width="8" height="8" viewBox="0 0 8 8"><path d="M.5.5l7 7M7.500.5l-7 7" stroke="#000" strokeWidth="1.500" /></svg>
            </DocTabLabel>
          </DocTab>
        </TabGroup>
        <TabScroll $w={17}><svg width="8" height="11" viewBox="0 0 8 11"><path d="M.5 1.500v8L4.500 5.500z" fill="none" stroke="#000" /></svg></TabScroll>
      </TabStrip>

      <Frame>
        <Sunken>
          <Workspace>
            <Canvas>
              <Panel>
                {STEPS.map((s) => (
                  <Step key={s.title}>
                    <StepTitle>{s.title}</StepTitle>
                    <Ring><Disc $pt={s.pt} $pr={s.pr}>{s.icon}</Disc></Ring>
                    <Description>{s.lines.map((l) => <span key={l}>{l}</span>)}</Description>
                    <Actions $pl={s.pl}>{s.buttons.map((b) => <ActionButton key={b} $w={s.w}>{b}</ActionButton>)}</Actions>
                  </Step>
                ))}
              </Panel>
            </Canvas>
            <ScrollBar>
              <svg width="9" height="6" viewBox="0 0 9 6"><path d="M1 5L4.500 1.500L8 5" fill="none" stroke="#555" strokeWidth="2" /></svg>
              <ScrollThumb />
              <svg width="9" height="6" viewBox="0 0 9 6"><path d="M1 1L4.500 4.500L8 1" fill="none" stroke="#555" strokeWidth="2" /></svg>
            </ScrollBar>
          </Workspace>
        </Sunken>
      </Frame>

      <StatusBar>
        {STATUS.map(([w, t], i) => <StatusCell key={i} $w={w}>{t}</StatusCell>)}
        <Zoom>
          <ZoomText>100 %</ZoomText>
          <svg width="122" height="28" viewBox="0 0 122 28">
            <path d="M0 14.500h7M115 14.500h7M118.500 11v7" stroke="#a0a0a0" />
            <rect x="11.500" y="15.500" width="99" height="3" fill="#e7eaea" stroke="#d6d6d6" />
            <path d="M16.500 3v5M31.500 4v4M46.500 4v4M61.500 4v4M75.500 4v4M90.500 4v4M105.500 3v5" stroke="#000" />
            <path d="M41 13L46.500 8L52 13V27H41Z" fill="#0078d7" />
          </svg>
        </Zoom>
      </StatusBar>
    </Window>
  );
}
